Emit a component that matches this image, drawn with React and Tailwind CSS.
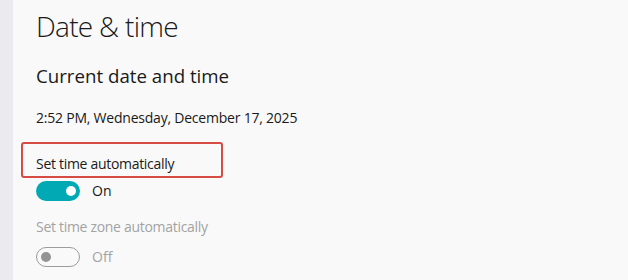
export default function App() {
  return (
    <div
      className="flex h-[280px] w-[628px] overflow-hidden bg-[#f9f9f9] text-[#1a1a1a]"
      style={{ fontFamily: '"Open Sans", "Noto Sans", sans-serif' }}
    >
      {/* nav edge */}
      <div className="w-[13px] shrink-0 bg-[#ebebef]" />

      <div className="flex flex-col pl-[23px] pt-[8px]">
        <h1 className="text-[28px] font-light leading-[36px] tracking-[-0.7px]">Date &amp; time</h1>

        <h2 className="mt-[20px] text-[18.7px] leading-[24px]">Current date and time</h2>

        <p className="mt-[20px] text-[14px] leading-[20px] tracking-[-0.22px]">2:52 PM, Wednesday, December 17, 2025</p>

        <div className="-ml-[15px] mt-[14px] h-[36px] w-[202px] rounded-[3px] border-2 border-[#d64c45] pl-[13px] pt-[7px]">
          <span className="text-[14px] leading-[20px] tracking-[-0.3px]">Set time automatically</span>
        </div>

        <div className="mt-[3px] flex items-center gap-[12px]">
          <div className="flex h-[20px] w-[44px] items-center justify-end rounded-full bg-[#00a9b4] pr-[4px]">
            <div className="h-[10px] w-[10px] rounded-full bg-white" />
          </div>
          <span className="text-[14px] leading-[20px]">On</span>
        </div>

        <p className="mt-[16px] text-[14px] leading-[20px] tracking-[-0.3px] text-[#a3a3a3]">Set time zone automatically</p>

        <div className="mt-[10px] flex items-center gap-[12px]">
          <div className="flex h-[20px] w-[44px] items-center rounded-full border-[1.5px] border-[#9c9c9c] pl-[4px]">
            <div className="h-[10px] w-[10px] rounded-full bg-[#949494]" />
          </div>
          <span className="text-[14px] leading-[20px] text-[#a3a3a3]">Off</span>
        </div>
      </div>
    </div>
  );
}
